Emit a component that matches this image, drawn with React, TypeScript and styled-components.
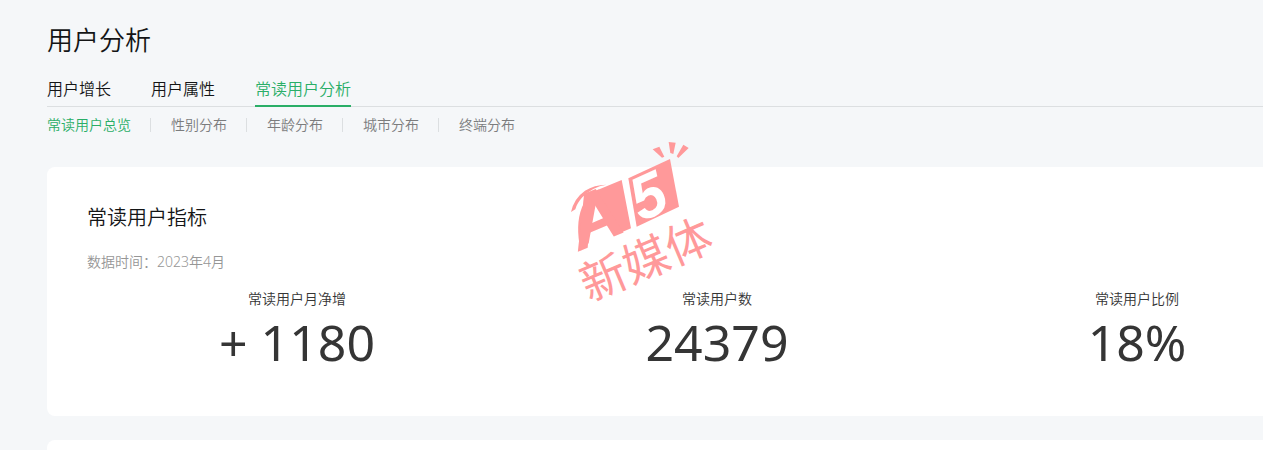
import React from "react";
import styled, { createGlobalStyle } from "styled-components";

const GlobalStyle = createGlobalStyle`
  * { box-sizing: border-box; }
  body {
    margin: 0;
    overflow: hidden;
    background: #f5f7f9;
    color: #141516;
    font-family: "Noto Sans", "Noto Sans CJK SC", sans-serif;
    font-size: 14px;
    line-height: 20px;
    font-weight: 350;
  }
  h1, h2, p, dl, dt, dd { margin: 0; font-weight: inherit; }
`;

const Page = styled.main`
  position: relative;
  min-width: 1387px;
  padding-left: 47px;
`;

const PageTitle = styled.h1`
  padding-top: 20px;
  font-size: 26px;
  line-height: 40px;
`;

const Tabs = styled.nav`
  display: flex;
  gap: 40px;
  margin-top: 16px;
  border-bottom: 1px solid #dcdfe1;
`;

const Tab = styled.a<{ $active?: boolean }>`
  margin-bottom: -1px;
  padding-bottom: 3px;
  border-bottom: 2px solid ${(p) => (p.$active ? "#2aae67" : "transparent")};
  color: ${(p) => (p.$active ? "#2aae67" : "inherit")};
  font-size: 16px;
  line-height: 26px;
  text-decoration: none;
`;

const SubTabs = styled.nav`
  display: flex;
  align-items: center;
  margin-top: 8px;
`;

const SubTab = styled.a<{ $active?: boolean }>`
  display: flex;
  align-items: center;
  color: ${(p) => (p.$active ? "#2aae67" : "#7b7c7d")};
  text-decoration: none;

  &:not(:first-child)::before {
    content: "";
    width: 1px;
    height: 14px;
    margin: 0 20px 0 19px;
    background: #dcdfe1;
  }
`;

const Card = styled.section`
  min-height: 80px;
  margin-top: 24px;
  padding: 36px 40px 41px;
  border-radius: 8px;
  background: #fff;
`;

const FirstCard = styled(Card)`
  margin-top: 32px;
`;

const CardTitle = styled.h2`
  font-size: 20px;
  line-height: 30px;
`;

const Period = styled.p`
  margin-top: 19px;
  color: #969696;
`;

const Metrics = styled.dl`
  display: grid;
  grid-template-columns: repeat(3, 1fr);
  margin-top: 17px;
  color: #353535;
  text-align: center;
`;

const Value = styled.dd`
  font-size: 50px;
  line-height: 66px;
  font-weight: 400;
`;

const Watermark = styled.svg`
  position: absolute;
  top: 130px;
  left: 560px;
  width: 170px;
  height: 180px;
  overflow: visible;
  pointer-events: none;
`;

const tabs = ["用户增长", "用户属性", "常读用户分析"];
const subTabs = ["常读用户总览", "性别分布", "年龄分布", "城市分布", "终端分布"];
const metrics = [
  { label: "常读用户月净增", value: "+ 1180" },
  { label: "常读用户数", value: "24379" },
  { label: "常读用户比例", value: "18%" },
];

export default function App() {
  return (
    <>
      <GlobalStyle />
      <Page>
        <PageTitle>用户分析</PageTitle>
        <Tabs>
          {tabs.map((t, i) => (
            <Tab key={t} href="#" $active={i === 2}>{t}</Tab>
          ))}
        </Tabs>
        <SubTabs>
          {subTabs.map((t, i) => (
            <SubTab key={t} href="#" $active={i === 0}>{t}</SubTab>
          ))}
        </SubTabs>
        <FirstCard>
          <CardTitle>常读用户指标</CardTitle>
          <Period>数据时间：2023年4月</Period>
          <Metrics>
            {metrics.map((m) => (
              <div key={m.label}>
                <dt>{m.label}</dt>
                <Value>{m.value}</Value>
              </div>
            ))}
          </Metrics>
        </FirstCard>
        <Card />
        <Watermark viewBox="0 0 510 540" fill="#ff999a">
          {/* sparks and the swoosh */}
          <path d="M278 58 L298 50 L313 80 L306 83Z M326 36 L347 38 L340 72 L331 69Z M370 44 L386 54 L355 84 L350 79Z" />
          <path d="M33 246 Q42 205 75 182 Q103 164 139 164 Q98 170 67 202 Q50 221 46 238Z" />
          {/* solid edges either side of the first character */}
          <path d="M98 186 L185 150 L213 295 L178 310 L138 240 L112 200Z" />
          <path d="M62 362 Q45 285 66 232 Q84 196 116 178 L104 240 L86 340Z" />
          <path d="M205 145 L330 87 L357 230 L230 290Z" />
          <text
            transform="translate(58 364) rotate(-23)"
            fontFamily="Liberation Sans, sans-serif"
            fontSize="222"
            fontWeight="700"
            fontStyle="italic"
          >
            A
          </text>
          <text
            transform="translate(243 276) rotate(-24)"
            fontFamily="Liberation Sans, sans-serif"
            fontSize="184"
            fontWeight="700"
            fontStyle="italic"
            fill="#fff"
          >
            5
          </text>
          <text
            transform="translate(87 516) rotate(-23)"
            fontFamily="Noto Sans CJK SC, sans-serif"
            fontSize="138"
            fontWeight="400"
          >
            新媒体
          </text>
        </Watermark>
      </Page>
    </>
  );
}
